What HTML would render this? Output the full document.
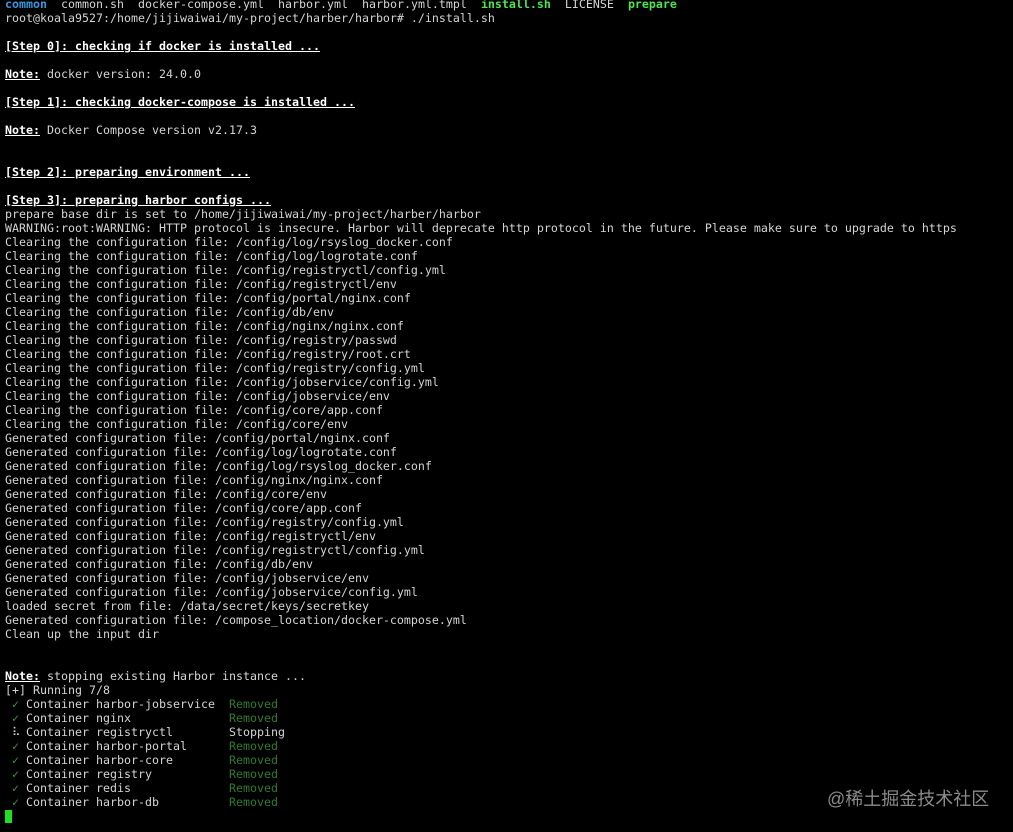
<!DOCTYPE html>
<html><head><meta charset="utf-8"><style>
html,body{margin:0;padding:0;background:#000;width:1013px;height:832px;overflow:hidden}
pre{position:absolute;left:5px;top:-3px;margin:0;font-family:"DejaVu Sans Mono","Liberation Mono",monospace;font-size:11.63px;line-height:14px;color:#d4d4d4}
b{color:#fff;text-decoration:underline}
.bl{color:#3a96dd;font-weight:bold}
.gr{color:#4ee44e;font-weight:bold}
.rm{color:#2f7a2f}
.ck{color:#3a9a3a}
.sp{display:inline-block;width:7px;overflow:hidden;vertical-align:top}
.cur{display:inline-block;width:7px;height:13px;background:#1fe01f;vertical-align:-3px}
.wm{position:absolute;left:827px;top:785px;font-family:"Liberation Sans","Noto Sans CJK SC",sans-serif;font-size:18px;color:#8a8a8a}
</style></head><body>
<pre><span class="bl">common</span>  common.sh  docker-compose.yml  harbor.yml  harbor.yml.tmpl  <span class="gr">install.sh</span>  LICENSE  <span class="gr">prepare</span>
root@koala9527:/home/jijiwaiwai/my-project/harber/harbor# ./install.sh

<b>[Step 0]: checking if docker is installed ...</b>

<b>Note:</b> docker version: 24.0.0

<b>[Step 1]: checking docker-compose is installed ...</b>

<b>Note:</b> Docker Compose version v2.17.3


<b>[Step 2]: preparing environment ...</b>

<b>[Step 3]: preparing harbor configs ...</b>
prepare base dir is set to /home/jijiwaiwai/my-project/harber/harbor
WARNING:root:WARNING: HTTP protocol is insecure. Harbor will deprecate http protocol in the future. Please make sure to upgrade to https
Clearing the configuration file: /config/log/rsyslog_docker.conf
Clearing the configuration file: /config/log/logrotate.conf
Clearing the configuration file: /config/registryctl/config.yml
Clearing the configuration file: /config/registryctl/env
Clearing the configuration file: /config/portal/nginx.conf
Clearing the configuration file: /config/db/env
Clearing the configuration file: /config/nginx/nginx.conf
Clearing the configuration file: /config/registry/passwd
Clearing the configuration file: /config/registry/root.crt
Clearing the configuration file: /config/registry/config.yml
Clearing the configuration file: /config/jobservice/config.yml
Clearing the configuration file: /config/jobservice/env
Clearing the configuration file: /config/core/app.conf
Clearing the configuration file: /config/core/env
Generated configuration file: /config/portal/nginx.conf
Generated configuration file: /config/log/logrotate.conf
Generated configuration file: /config/log/rsyslog_docker.conf
Generated configuration file: /config/nginx/nginx.conf
Generated configuration file: /config/core/env
Generated configuration file: /config/core/app.conf
Generated configuration file: /config/registry/config.yml
Generated configuration file: /config/registryctl/env
Generated configuration file: /config/registryctl/config.yml
Generated configuration file: /config/db/env
Generated configuration file: /config/jobservice/env
Generated configuration file: /config/jobservice/config.yml
loaded secret from file: /data/secret/keys/secretkey
Generated configuration file: /compose_location/docker-compose.yml
Clean up the input dir


<b>Note:</b> stopping existing Harbor instance ...
[+] Running 7/8
 <span class="ck">✓</span> Container harbor-jobservice  <span class="rm">Removed</span>
 <span class="ck">✓</span> Container nginx              <span class="rm">Removed</span>
 <span class="sp">⠧</span> Container registryctl        Stopping
 <span class="ck">✓</span> Container harbor-portal      <span class="rm">Removed</span>
 <span class="ck">✓</span> Container harbor-core        <span class="rm">Removed</span>
 <span class="ck">✓</span> Container registry           <span class="rm">Removed</span>
 <span class="ck">✓</span> Container redis              <span class="rm">Removed</span>
 <span class="ck">✓</span> Container harbor-db          <span class="rm">Removed</span>
<span class="cur"></span></pre>
<div class="wm">@稀土掘金技术社区</div>
</body></html>
